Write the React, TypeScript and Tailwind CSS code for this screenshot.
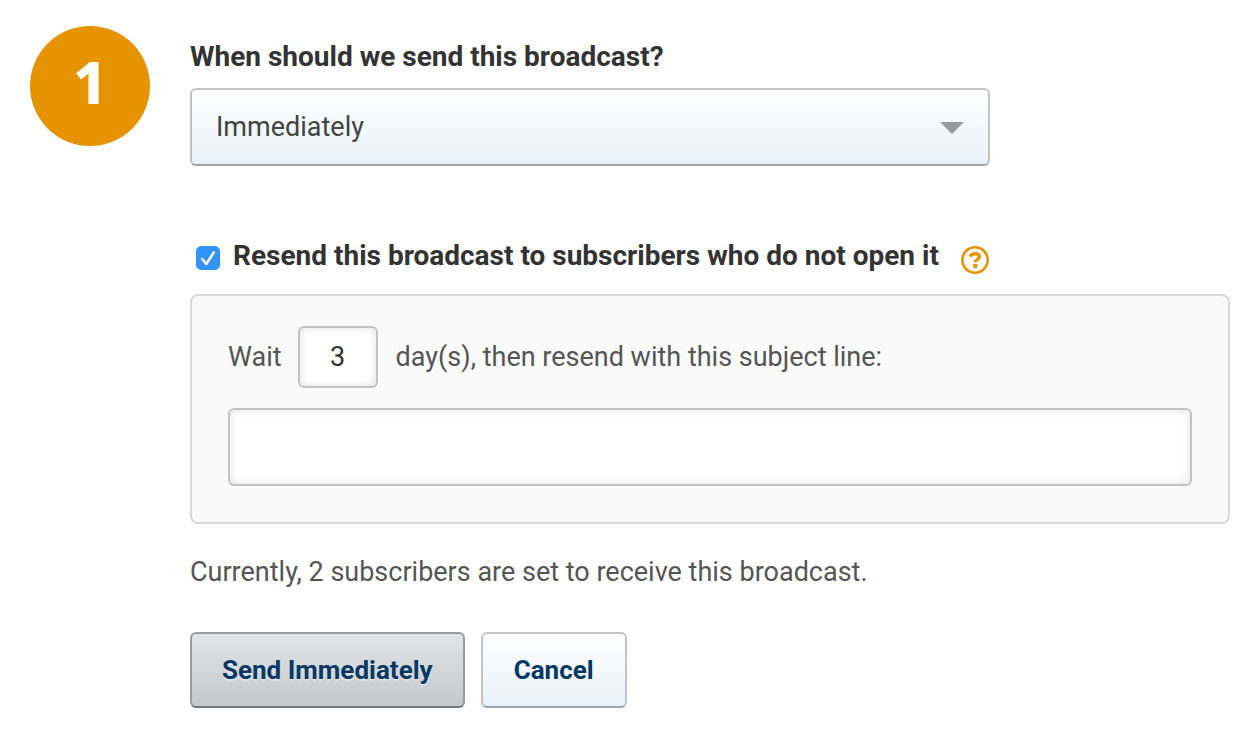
import { useState } from "react";

function StepBadge({ step }: { step: number }) {
  return (
    <div className="flex size-[120px] shrink-0 items-center justify-center rounded-full bg-[#e59400] pb-2 font-['Noto_Sans',sans-serif] text-[58px] leading-none font-extrabold text-white">
      {step}
    </div>
  );
}

function HelpIcon() {
  return (
    <svg viewBox="0 0 28 28" className="size-7" fill="none" aria-hidden="true">
      <circle cx="14" cy="14" r="12.7" stroke="#e59400" strokeWidth="2.6" />
      <path
        d="M9.2 10.600C10.100 8.600 11.700 7.700 14 7.700c2.600 0 4.300 1.100 4.300 3 0 2.700-4.100 2.700-4.100 5.600"
        stroke="#e59400"
        strokeWidth="3.400"
      />
      <rect x="12.200" y="18" width="4" height="4" fill="#e59400" />
    </svg>
  );
}

export default function App() {
  const [when, setWhen] = useState("now");
  const [resend, setResend] = useState(true);
  const [days, setDays] = useState("3");
  const [subject, setSubject] = useState("");

  return (
    <form
      onSubmit={(e) => e.preventDefault()}
      className="flex items-start gap-10 bg-white py-[26px] pr-[27px] pl-[30px] font-[Roboto,sans-serif] text-[27px] leading-8 text-[#555555]"
    >
      <StepBadge step={1} />

      <div className="min-w-0 grow pt-[15px]">
        <label htmlFor="when" className="block text-[28px] font-bold text-[#333333]">
          When should we send this broadcast?
        </label>
        <div className="relative mt-[15px] max-w-[800px]">
          <select
            id="when"
            value={when}
            onChange={(e) => setWhen(e.target.value)}
            className="block h-[78px] w-full appearance-none rounded-md border-2 border-[#c3c3c3] border-b-[#a3a3a3] bg-linear-to-b from-white to-[#e8f1f9] pr-16 pl-6 text-[#444444]"
          >
            <option value="now">Immediately</option>
            <option value="later">At a scheduled time</option>
          </select>
          <svg
            viewBox="0 0 24 12"
            className="pointer-events-none absolute top-[34px] right-[26px] h-3 w-6"
            aria-hidden="true"
          >
            <path d="M0 0h24L12 12z" fill="#999999" />
          </svg>
        </div>

        <div className="mt-[72px] flex items-center pl-[6px]">
          <span className="relative mt-1 size-6 shrink-0">
            <input
              id="resend"
              type="checkbox"
              checked={resend}
              onChange={(e) => setResend(e.target.checked)}
              className="peer block size-6 appearance-none rounded-[5px] border border-[#bbbbbb] bg-white checked:border-[#3393fd] checked:bg-[#3393fd]"
            />
            <svg
              viewBox="0 0 24 24"
              className="pointer-events-none absolute inset-0 hidden size-6 peer-checked:block"
              fill="none"
              aria-hidden="true"
            >
              <path
                d="M6.300 13l4 5L17.800 6.300"
                stroke="#ffffff"
                strokeWidth="2.500"
                strokeLinecap="round"
                strokeLinejoin="round"
              />
            </svg>
          </span>
          <label htmlFor="resend" className="ml-[13px] text-[28px] font-bold text-[#333333]">
            Resend this broadcast to subscribers who do not open it
          </label>
          <button type="button" aria-label="About resending" className="mt-2 ml-[22px] shrink-0">
            <HelpIcon />
          </button>
        </div>

        <div className="mt-5 rounded-lg border-2 border-[#d9d9d9] bg-[#fafafa] px-9 pt-[30px] pb-9">
          <div className="flex items-center">
            <label htmlFor="days">Wait</label>
            <input
              id="days"
              type="text"
              inputMode="numeric"
              value={days}
              onChange={(e) => setDays(e.target.value)}
              className="mr-[18px] ml-4 h-[62px] w-20 rounded-md border-2 border-[#c3c3c3] bg-white text-center text-[#333333] shadow-[inset_0_0_8px_rgba(0,0,0,0.12)]"
            />
            <label htmlFor="subject">day(s), then resend with this subject line:</label>
          </div>
          <input
            id="subject"
            type="text"
            value={subject}
            onChange={(e) => setSubject(e.target.value)}
            className="mt-5 block h-[78px] w-full rounded-md border-2 border-[#c3c3c3] bg-white px-6 text-[#333333] shadow-[inset_0_0_8px_rgba(0,0,0,0.12)]"
          />
        </div>

        <p className="mt-8">Currently, 2 subscribers are set to receive this broadcast.</p>

        <div className="mt-11 flex gap-4 text-[26px] font-bold text-[#073763]">
          <button
            type="submit"
            className="h-[76px] rounded-md border-2 border-[#999b9c] border-b-[#747778] bg-linear-to-b from-[#e1e5e8] to-[#c4c8ca] px-[30px] text-shadow-[0_2px_2px_rgba(255,255,255,0.4)]"
          >
            Send Immediately
          </button>
          <button
            type="button"
            className="h-[76px] rounded-md border-2 border-[#c3c3c3] border-b-[#a3a3a3] bg-linear-to-b from-white to-[#e8f1f9] px-[31px]"
          >
            Cancel
          </button>
        </div>
      </div>
    </form>
  );
}
